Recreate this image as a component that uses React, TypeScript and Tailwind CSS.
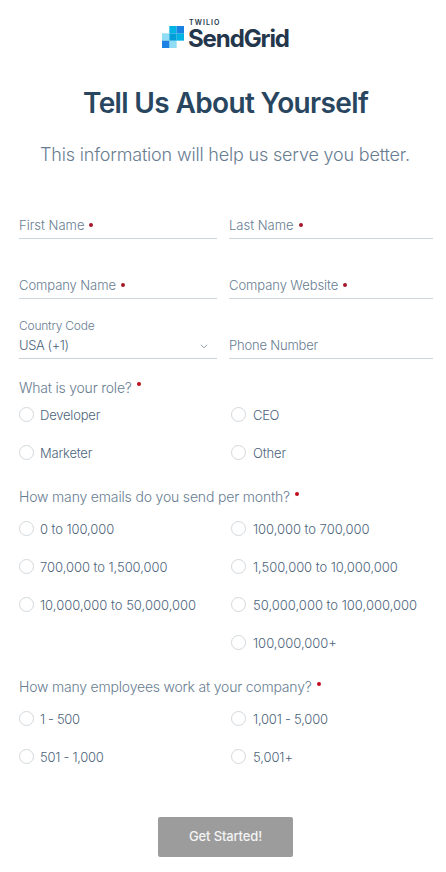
import React from "react";

function Logo() {
  return (
    <div className="flex h-[31px] w-[128px] items-start">
      <svg width="22" height="22" viewBox="0 0 3 3" className="mt-[7px] shrink-0">
        <rect x="0" y="1" width="1" height="1" fill="#8fdcf4" />
        <rect x="1" y="2" width="1" height="1" fill="#8fdcf4" />
        <rect x="0" y="2" width="1" height="1" fill="#1a82e2" />
        <rect x="1" y="0" width="1" height="1" fill="#00b3e3" />
        <rect x="2" y="1" width="1" height="1" fill="#00b3e3" />
        <rect x="1" y="1" width="1" height="1" fill="#009dd9" />
        <rect x="2" y="0" width="1" height="1" fill="#1a82e2" />
      </svg>
      <div className="ml-[4px] flex flex-col text-[#23364b]">
        <span className="ml-[1px] text-[7px] leading-[8px] font-semibold tracking-[1.1px]">TWILIO</span>
        <span className="text-[24px] leading-[24px] font-bold tracking-[-1.1px]">SendGrid</span>
      </div>
    </div>
  );
}

function Field({ label, tracking = "", dot = "" }: { label: string; tracking?: string; dot?: string }) {
  return (
    <div className="flex h-[60px] items-end border-b border-[#ccd6de] pb-[4px] text-[13px] leading-[18px] text-[#687d91]">
      <span className={tracking}>{label}</span>
      {dot && <span className={`mb-[7px] size-[4px] rounded-full bg-[#a3192b] ${dot}`} />}
    </div>
  );
}

function Option({ label, tracking = "", gap = "ml-[6px]" }: { label: string; tracking?: string; gap?: string }) {
  return (
    <label className="flex h-[38px] items-start">
      <span className="size-[15px] shrink-0 rounded-full border border-[#d3d8dc]" />
      <span className={`pt-px text-[13px] leading-[15px] whitespace-nowrap text-[#4c647b] ${gap} ${tracking}`}>{label}</span>
    </label>
  );
}

function Question({ text, tracking = "", dot = "mt-[5px]" }: { text: string; tracking?: string; dot?: string }) {
  return (
    <div className="flex h-[20px] items-start text-[14px] leading-[20px] text-[#687d91]">
      <span className={tracking}>{text}</span>
      <span className={`ml-[5px] size-[4px] rounded-full bg-[#c00d1e] ${dot}`} />
    </div>
  );
}

export default function App() {
  return (
    <main className="flex h-[872px] w-[446px] flex-col bg-white font-['Inter','Liberation_Sans',sans-serif] font-light">
      <div className="mt-[19px] ml-[162px]">
        <Logo />
      </div>
      <h1 className="mt-[34px] ml-[83px] text-[28px] leading-[38px] font-semibold tracking-[-0.64px] whitespace-nowrap text-[#294661]">
        Tell Us About Yourself
      </h1>
      <p className="mt-[20px] ml-[40px] text-[18px] leading-[26px] tracking-[-0.18px] whitespace-nowrap text-[#687d91]">
        This information will help us serve you better.
      </p>

      <div className="mt-[11px] ml-[19px] grid grid-cols-[198px_204px] gap-x-[12px]">
        <Field label="First Name" dot="ml-[4px]" />
        <Field label="Last Name" dot="ml-[5px]" />
        <Field label="Company Name" tracking="tracking-[-0.08px]" dot="ml-[5px]" />
        <Field label="Company Website" tracking="tracking-[-0.07px]" dot="ml-[5px]" />
        <div className="flex h-[60px] flex-col justify-end border-b border-[#ccd1d5] pb-[4px]">
          <span className="text-[12px] leading-[16px] tracking-[-0.22px] text-[#687d91]">Country Code</span>
          <div className="mt-[2px] flex items-center justify-between text-[13px] leading-[18px] text-[#4c647b]">
            <span className="tracking-[-0.4px]">USA (+1)</span>
            <svg width="8" height="5" viewBox="0 0 8 5" className="mt-[2px] mr-[9px]" fill="none" stroke="#8a99a6">
              <path d="M1 .8 4 3.8 7 .8" />
            </svg>
          </div>
        </div>
        <Field label="Phone Number" tracking="tracking-[-0.18px]" />
      </div>

      <section className="mt-[19px] ml-[19px]">
        <Question text="What is your role?" tracking="tracking-[-0.22px]" dot="mt-[4px]" />
        <div className="mt-[9px] grid grid-cols-[212px_1fr]">
          <Option label="Developer" tracking="tracking-[-0.2px]" />
          <Option label="CEO" tracking="tracking-[-0.3px]" gap="ml-[7px]" />
          <Option label="Marketer" tracking="tracking-[-0.2px]" />
          <Option label="Other" tracking="tracking-[-0.1px]" gap="ml-[7px]" />
        </div>
      </section>

      <section className="mt-[4px] ml-[19px]">
        <Question text="How many emails do you send per month?" tracking="tracking-[-0.17px]" />
        <div className="mt-[14px] grid grid-cols-[212px_1fr]">
          <Option label="0 to 100,000" tracking="tracking-[-0.08px]" />
          <Option label="100,000 to 700,000" tracking="tracking-[-0.04px]" gap="ml-[7px]" />
          <Option label="700,000 to 1,500,000" tracking="tracking-[-0.05px]" />
          <Option label="1,500,000 to 10,000,000" tracking="tracking-[-0.04px]" gap="ml-[7px]" />
          <Option label="10,000,000 to 50,000,000" />
          <Option label="50,000,000 to 100,000,000" gap="ml-[7px]" />
          <span />
          <Option label="100,000,000+" gap="ml-[7px]" />
        </div>
      </section>

      <section className="mt-[4px] ml-[19px]">
        <Question text="How many employees work at your company?" tracking="tracking-[-0.2px]" />
        <div className="mt-[14px] grid grid-cols-[212px_1fr]">
          <Option label="1 - 500" tracking="tracking-[-0.35px]" />
          <Option label="1,001 - 5,000" tracking="tracking-[-0.22px]" gap="ml-[7px]" />
          <Option label="501 - 1,000" tracking="tracking-[-0.28px]" />
          <Option label="5,001+" tracking="tracking-[-0.1px]" gap="ml-[7px]" />
        </div>
      </section>

      <button className="mt-[30px] ml-[158px] h-[40px] w-[135px] shrink-0 rounded-[2px] bg-[#9c9c9c] text-[13px] font-medium tracking-[-0.15px] text-[#f4f4f4]">
        Get Started!
      </button>
    </main>
  );
}
